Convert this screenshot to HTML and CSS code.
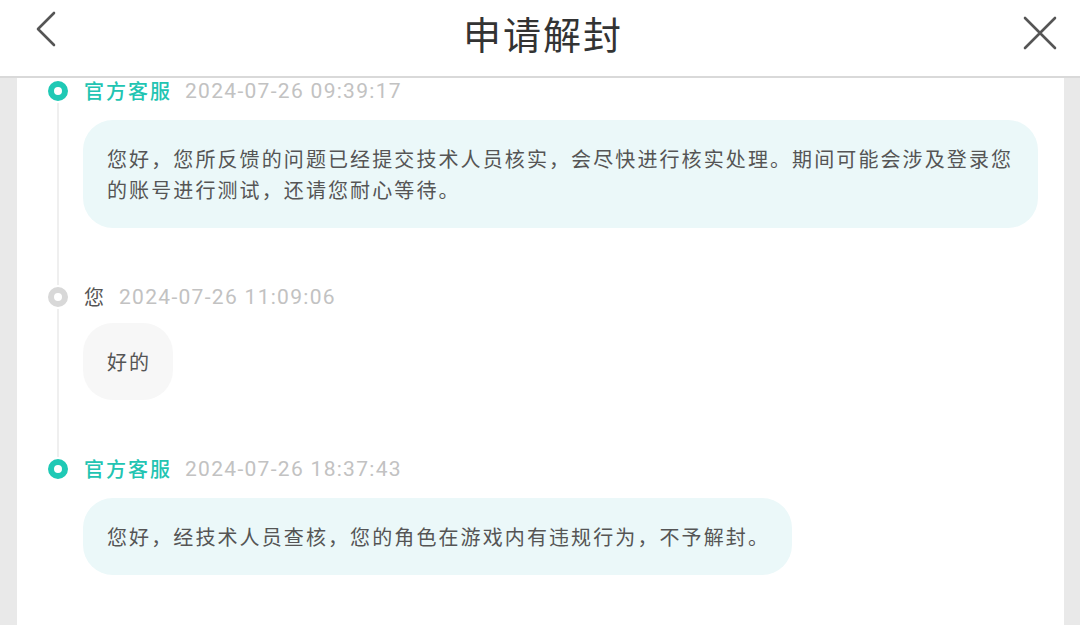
FILE: index.html
```html
<!DOCTYPE html>
<html lang="zh-CN">
<head>
<meta charset="utf-8">
<title>申请解封</title>
<link rel="stylesheet" href="styles.css">
</head>
<body>
<header class="topbar">
  <div class="topbar-left">
    <svg class="icon-back" width="22" height="36" viewBox="0 0 22 36" aria-hidden="true">
      <path d="M19 2 L3 18 L19 34" fill="none" stroke="#555" stroke-width="2.6" stroke-linecap="round" stroke-linejoin="round"/>
    </svg>
  </div>
  <h1 class="title">申请解封</h1>
  <div class="topbar-right">
    <svg class="icon-close" width="36" height="36" viewBox="0 0 36 36" aria-hidden="true">
      <path d="M3 3 L33 33 M33 3 L3 33" fill="none" stroke="#555" stroke-width="2.6" stroke-linecap="round"/>
    </svg>
  </div>
</header>
<main class="panel">
  <div class="item item-official">
    <div class="rail"><span class="dot dot-teal"></span><span class="line"></span></div>
    <div class="body">
      <div class="head"><span class="name name-official">官方客服</span><span class="time">2024-07-26 09:39:17</span></div>
      <div class="bubble bubble-teal">您好，您所反馈的问题已经提交技术人员核实，会尽快进行核实处理。期间可能会涉及登录您的账号进行测试，还请您耐心等待。</div>
    </div>
  </div>
  <div class="item item-user">
    <div class="rail"><span class="dot dot-grey"></span><span class="line"></span></div>
    <div class="body">
      <div class="head"><span class="name name-user">您</span><span class="time">2024-07-26 11:09:06</span></div>
      <div class="bubble bubble-grey">好的</div>
    </div>
  </div>
  <div class="item item-official item-last">
    <div class="rail"><span class="dot dot-teal"></span></div>
    <div class="body">
      <div class="head"><span class="name name-official">官方客服</span><span class="time">2024-07-26 18:37:43</span></div>
      <div class="bubble bubble-teal">您好，经技术人员查核，您的角色在游戏内有违规行为，不予解封。</div>
    </div>
  </div>
</main>
</body>
</html>
```
FILE: styles.css
```css
* { box-sizing: border-box; }
html, body { height: 100%; }
body {
  margin: 0;
  background: #e9e9e9;
  font-family: "Noto Sans CJK SC", "Noto Sans", sans-serif;
  color: #555;
  overflow: hidden;
  display: flex;
  flex-direction: column;
}
.topbar {
  height: 78px;
  flex: none;
  background: #fff;
  border-bottom: 2px solid #d9d9d9;
  display: grid;
  grid-template-columns: 1fr auto 1fr;
  align-items: start;
}
.topbar-left { padding: 11px 0 0 35px; }
.topbar-right { display: flex; justify-content: flex-end; padding: 15px 22px 0 0; }
.icon-back, .icon-close { display: block; }
.title {
  margin: 9px 0 0 6px;
  font-size: 38px;
  line-height: 48px;
  font-weight: 400;
  letter-spacing: 2px;
  color: #333;
}
.panel {
  flex: 1;
  margin: 0 16px 0 17px;
  background: #fff;
  padding: 1px 26px 0 31px;
}
.item {
  display: grid;
  grid-template-columns: 20px 1fr;
  column-gap: 15px;
}
.rail {
  display: flex;
  flex-direction: column;
  align-items: center;
}
.dot {
  width: 20px;
  height: 20px;
  margin: 2px 0;
  border-radius: 50%;
  background: #fff;
  flex: none;
}
.dot-teal { border: 6.5px solid #1fc9b5; }
.dot-grey { border: 6.5px solid #d8d8d8; }
.line {
  flex: 1;
  width: 2px;
  background: #efefef;
}
.body {
  display: flex;
  flex-direction: column;
  align-items: flex-start;
  padding-bottom: 57px;
}
.item-last .body { padding-bottom: 0; }
.head {
  height: 24px;
  display: flex;
  align-items: center;
  padding-left: 1px;
  white-space: nowrap;
}
.name {
  font-size: 20px;
  line-height: 24px;
  letter-spacing: 2px;
}
.name-official { color: #22c4b2; font-weight: 500; }
.name-user { color: #555; }
.time {
  margin-left: 13px;
  font-family: Roboto, "Noto Sans", sans-serif;
  font-size: 21px;
  line-height: 24px;
  letter-spacing: 1.3px;
  color: #c2c2c2;
}
.bubble {
  display: inline-block;
  padding: 23px 22px 23px 24px;
  border-radius: 30px;
  font-size: 20px;
  line-height: 31px;
  letter-spacing: 2.1px;
  color: #555;
}
.item-official .bubble { margin-top: 17px; }
.item-user .bubble { margin-top: 14px; }
.bubble-teal { background: #ebf8f9; }
.bubble-grey { background: #f7f7f7; }
```
